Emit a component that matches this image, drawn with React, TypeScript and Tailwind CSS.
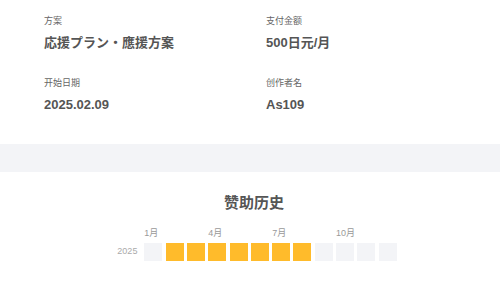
import React from "react";

const font = { fontFamily: '"Liberation Sans", "Noto Sans CJK JP", "Noto Sans CJK SC", sans-serif' };

function Field({ label, value }: { label: string; value: string }) {
  return (
    <div className="flex flex-col">
      <div className="text-[9px] leading-[12px] text-[#666]">{label}</div>
      <div className="mt-[7px] text-[13px] leading-[18px] font-bold text-[#555]">{value}</div>
    </div>
  );
}

export default function App() {
  const filled = [false, true, true, true, true, true, true, true, false, false, false, false];
  const months = ["1月", "", "", "4月", "", "", "7月", "", "", "10月", "", ""];
  return (
    <div className="w-[500px] h-[284px] bg-white overflow-hidden" style={font}>
      <div className="grid grid-cols-[222px_1fr] pl-[44px] pt-[15px] gap-y-[25px]">
        <Field label="方案" value="応援プラン・應援方案" />
        <Field label="支付金额" value="500日元/月" />
        <Field label="开始日期" value="2025.02.09" />
        <Field label="创作者名" value="As109" />
      </div>
      <div className="mt-[30px] h-[28px] bg-[#f3f4f7]" />
      <div className="flex flex-col items-center">
        <div className="mt-[21px] text-[15px] leading-[20px] font-bold text-[#555] pl-[8px]">赞助历史</div>
        <div className="mt-[14px] flex flex-col pl-[14px]">
          <div className="flex gap-[3.3px] ml-[27px]">
            {months.map((m, i) => (
              <div key={i} className="w-[18px] text-[9px] leading-[12px] text-[#999] whitespace-nowrap">{m}</div>
            ))}
          </div>
          <div className="mt-[4px] flex items-center">
            <div className="w-[27px] text-[9px] text-[#aaa]">2025</div>
            <div className="flex gap-[3.3px]">
              {filled.map((f, i) => (
                <div key={i} className={f ? "w-[18px] h-[18px] bg-[#ffbb2b]" : "w-[18px] h-[18px] bg-[#f3f4f7]"} />
              ))}
            </div>
          </div>
        </div>
      </div>
    </div>
  );
}
